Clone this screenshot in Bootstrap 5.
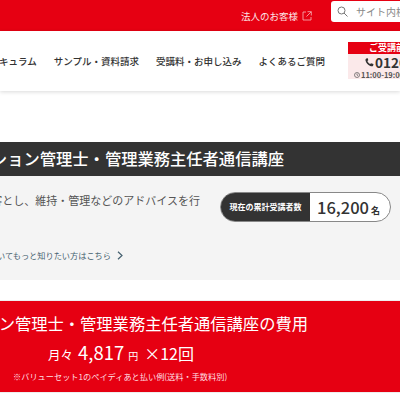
<!DOCTYPE html>
<html lang="ja">
<head>
  <meta charset="UTF-8" />
  <meta name="viewport" content="width=device-width, initial-scale=1.0" />
  <title>マンション管理士・管理業務主任者通信講座</title>
  <link href="https://cdn.jsdelivr.net/npm/bootstrap@5.3.0/dist/css/bootstrap.min.css" rel="stylesheet" />
  <style>
    html, body { overflow: hidden; }
    body { width: 400px; height: 400px; font-family: "Noto Sans CJK JP", "Noto Sans", sans-serif; color: #333; background: #fff; }
    a { color: inherit; text-decoration: none; }

    .top-bar { height: 31px; background: #e60012; color: #fff; font-size: 9.500px; }
    .top-link { margin-right: 19px; padding-top: 1px; opacity: .9; }
    .search-box { width: 69px; height: 21px; margin-bottom: 9px; padding-left: 6px; background: #fff; border-radius: 3px 0 0 3px; font-size: 10px; color: #888; white-space: nowrap; overflow: hidden; flex-shrink: 0; }
    .search-box svg { flex-shrink: 0; }

    .site-header { height: 60px; box-shadow: 0 1px 4px rgba(0,0,0,.15); font-size: 9.500px; font-weight: 500; position: relative; }
    .nav-items { gap: 17px; margin-right: 23px; white-space: nowrap; }
    .tel-box { width: 52px; height: 37px; flex-shrink: 0; margin-top: 11px; align-self: flex-start; background: #fbe9ea; overflow: hidden; white-space: nowrap; }
    .tel-head { height: 12px; background: #e60012; color: #fff; font-size: 9px; font-weight: 700; line-height: 12px; padding-left: 21px; }
    .tel-num { font-size: 13.500px; font-weight: 700; line-height: 15px; padding-left: 17px; margin-top: 1px; gap: 1px; }
    .tel-hours { font-size: 7.500px; font-weight: 700; line-height: 9px; padding-left: 6px; color: #555; gap: 1px; }
    .tel-num svg, .tel-hours svg { flex-shrink: 0; }

    .course-title { margin-top: 51px; height: 34px; background: #333; color: #fff; font-size: 16.300px; font-weight: 500; padding-right: 116px; white-space: nowrap; }
    .intro { height: 104px; background: #f4f4f4; }
    .intro-text { width: 200px; flex-shrink: 0; white-space: nowrap; }
    .intro-line { font-size: 11px; color: #555; margin-top: 16px; line-height: 16px; }
    .intro-link { font-size: 8.200px; color: #44606f; margin-top: 40px; margin-left: -3px; line-height: 14px; gap: 6px; }
    .count-pill { width: 171px; height: 30px; margin: 16px 0 0 20px; border: 1px solid #888; border-radius: 15px; background: #fff; overflow: hidden; flex-shrink: 0; }
    .count-label { width: 89px; background: #333; color: #fff; font-size: 8px; font-weight: 700; white-space: nowrap; }
    .count-value { font-size: 16.500px; font-weight: 500; padding-left: 7px; white-space: nowrap; }
    .count-value small { font-size: 9px; font-weight: 700; margin-left: 2px; }

    .price-box { margin-top: 21px; height: 91px; background: #e60012; color: #fff; white-space: nowrap; box-shadow: 0 0 1px rgba(0,0,0,.4); }
    .price-title { font-size: 16.300px; line-height: 22px; padding: 11px 92px 0 0; }
    .price-main { padding: 5px 0 0 48px; line-height: 26px; font-size: 16px; }
    .price-main b { font-weight: 400; font-size: 18.500px; }
    .price-main i { font-style: normal; font-size: 10px; margin: 0 6px 0 4px; }
    .price-jp { font-size: 12.500px; margin-right: 5px; }
    .price-note { font-size: 8.200px; padding: 0 0 0 13px; line-height: 14px; color: #ffdfe0; }
  </style>
</head>
<body>
  <div class="top-bar d-flex justify-content-end align-items-center">
    <a href="#" class="top-link d-flex align-items-center gap-1">法人のお客様
      <svg width="10" height="10" viewBox="0 0 10 10" fill="none" stroke="#fff" stroke-width=".8" opacity=".8"><path d="M4 1H1v8h8V6M5.500 .7h3.800v3.800M9.200 .8 4.500 5.500"/></svg>
    </a>
    <div class="search-box d-flex align-items-center gap-2">
      <svg width="11" height="11" viewBox="0 0 11 11" fill="none" stroke="#777" stroke-width="1"><circle cx="4.500" cy="4.500" r="3.500"/><path d="m7 7 3.500 3.500"/></svg>
      <span>サイト内検索</span>
    </div>
  </div>

  <header class="site-header d-flex justify-content-end align-items-center">
    <nav class="nav-items d-flex">
      <a href="#">カリキュラム</a>
      <a href="#">サンプル・資料請求</a>
      <a href="#">受講料・お申し込み</a>
      <a href="#">よくあるご質問</a>
    </nav>
    <div class="tel-box">
      <div class="tel-head">ご受講前</div>
      <div class="tel-num d-flex align-items-center">
        <svg width="9" height="9" viewBox="0 0 9 9" fill="#333"><path d="M1.200 .5 2.800 .2 3.300 2.300 2.400 3C2.900 4.400 3.800 5.400 5.200 6.100L6 5.200 8.500 6 8 7.900C7.400 8.500 6.400 8.500 5.200 8C2.900 7 1 4.900.5 2.600.3 1.700.6 1 1.200 .5Z"/></svg>
        <span>0120-000</span>
      </div>
      <div class="tel-hours d-flex align-items-center">
        <svg width="6" height="6" viewBox="0 0 6 6" fill="none" stroke="#555" stroke-width=".7"><circle cx="3" cy="3" r="2.500"/><path d="M3 1.500V3l1 .7"/></svg>
        <span>11:00-19:00</span>
      </div>
    </div>
  </header>

  <h1 class="course-title d-flex justify-content-end align-items-center mb-0">マンション管理士・管理業務主任者通信講座</h1>

  <section class="intro d-flex">
    <div class="intro-text d-flex flex-column align-items-end">
      <p class="intro-line mb-0">顧客とし、維持・管理などのアドバイスを行</p>
      <a href="#" class="intro-link align-self-start d-flex align-items-center">
        <span>いてもっと知りたい方はこちら</span>
        <svg width="6" height="9" viewBox="0 0 6 9" fill="none" stroke="#44606f" stroke-width="1.200"><path d="m1 .7 4 3.800-4 3.800"/></svg>
      </a>
    </div>
    <div class="count-pill d-flex">
      <div class="count-label d-flex align-items-center justify-content-center">現在の累計受講者数</div>
      <div class="count-value d-flex align-items-center"><span>16,200<small>名</small></span></div>
    </div>
  </section>

  <section class="price-box">
    <div class="price-title d-flex justify-content-end">マンション管理士・管理業務主任者通信講座の費用</div>
    <div class="price-main"><span class="price-jp">月々</span><b>4,817</b><i>円</i>×12回</div>
    <div class="price-note">※バリューセット1のペイディあと払い例(送料・手数料別)</div>
  </section>

  <script src="https://cdn.jsdelivr.net/npm/bootstrap@5.3.0/dist/js/bootstrap.bundle.min.js"></script>
</body>
</html>
